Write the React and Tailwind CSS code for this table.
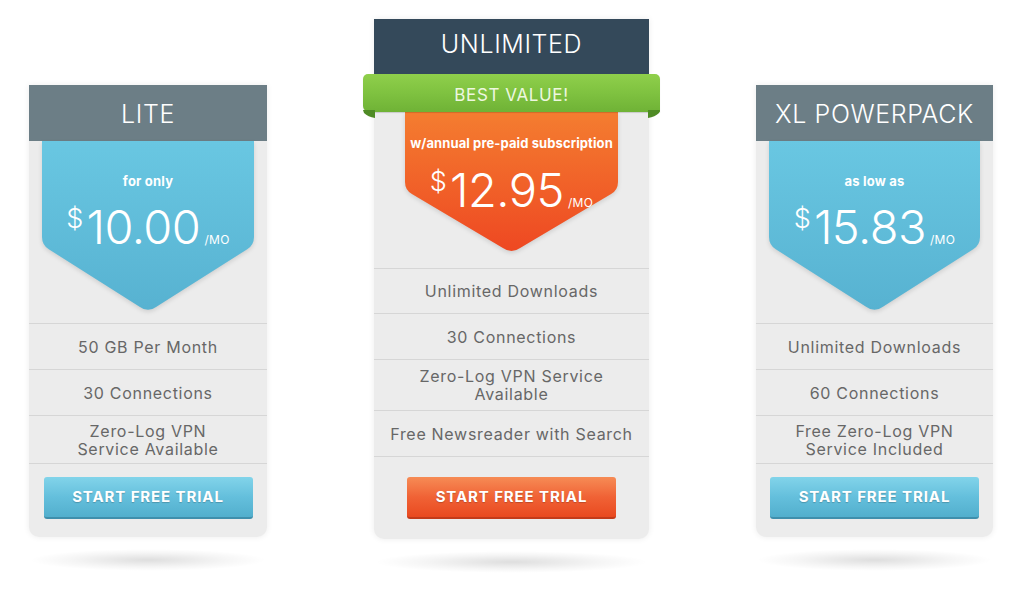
import React from "react";

const shieldPath = (w, straight, tip) => {
  const mid = w / 2;
  const r = 8;
  // slope of the V edges
  const dx = mid;
  const dy = tip - straight;
  const len = Math.sqrt(dx * dx + dy * dy);
  const ux = dx / len;
  const uy = dy / len;
  return [
    `M0 0 H${w} V${straight - r}`,
    `Q${w} ${straight} ${w - r * ux} ${straight + r * uy}`,
    `L${mid + 10 * ux} ${tip - 10 * uy}`,
    `Q${mid} ${tip + 1} ${mid - 10 * ux} ${tip - 10 * uy}`,
    `L${r * ux} ${straight + r * uy}`,
    `Q0 ${straight} 0 ${straight - r} Z`,
  ].join(" ");
};

const Shield = ({ id, w, straight, tip, from, to, className, children }) => (
  <div className={`relative mx-auto ${className}`} style={{ width: w, height: tip }}>
    <svg className="absolute inset-0 drop-shadow-[0_2px_2px_rgba(0,0,0,0.12)]" width={w} height={tip} viewBox={`0 0 ${w} ${tip}`}>
      <defs>
        <linearGradient id={id} x1="0" y1="0" x2="0" y2="1">
          <stop offset="0%" stopColor={from} />
          <stop offset="100%" stopColor={to} />
        </linearGradient>
      </defs>
      <path d={shieldPath(w, straight, tip)} fill={`url(#${id})`} />
    </svg>
    <div className="relative flex flex-col items-center text-white">{children}</div>
  </div>
);

const Price = ({ amount, className }) => (
  <div className={`flex items-baseline ${className}`}>
    <span className="self-start mt-[2px] text-[27px] font-light leading-none">$</span>
    <span className="text-[47px] font-light leading-none tracking-[-0.5px] ml-[3px]">{amount}</span>
    <span className="text-[12px] ml-[4px] leading-none tracking-[0.3px]">/MO</span>
  </div>
);

const Row = ({ children, h = "h-[46px]", tall }) => (
  <div
    className={`flex items-center justify-center text-center border-t border-[#d6d6d6] text-[16px] text-[#676767] tracking-[0.7px] ${h} ${
      tall ? "leading-[18px]" : ""
    }`}
  >
    {children}
  </div>
);

const TrialButton = ({ orange }) => (
  <button
    className={`mx-auto flex h-[42px] w-[209px] items-center justify-center rounded-[3px] border-b-2 text-[15px] font-bold tracking-[0.9px] text-white [text-shadow:0_1px_1px_rgba(0,0,0,0.2)] ${
      orange
        ? "bg-gradient-to-b from-[#f68b55] via-[#f06235] to-[#e9491f] border-[#c23b1a]"
        : "bg-gradient-to-b from-[#82d4ea] via-[#64bfdc] to-[#52afcd] border-[#3f8fac]"
    }`}
  >
    START FREE TRIAL
  </button>
);

const FloorShadow = () => (
  <div className="mt-[12px] h-[22px] w-full bg-[radial-gradient(ellipse_at_center,rgba(0,0,0,0.13),rgba(0,0,0,0.04)_45%,transparent_70%)]" />
);

const SideCard = ({ title, id, lead, amount, features, width }) => (
  <div className="mt-[66px] flex flex-col" style={{ width }}>
    <div className="rounded-b-[10px] bg-[#ececec] shadow-[0_0_6px_rgba(0,0,0,0.08)]">
      <div className="flex h-[56px] items-center justify-center bg-[#6c7e86] pt-[3px] text-[25px] font-light tracking-[0.6px] text-white">
        {title}
      </div>
      <div className="h-[182px]">
        <Shield id={id} w={width - 26} straight={104} tip={171} from="#69c7e2" to="#57b2d1">
          <div className="mt-[32px] text-[13px] font-bold leading-[16px] tracking-[0.2px]">{lead}</div>
          <Price amount={amount} className="mt-[14px]" />
        </Shield>
      </div>
      {features.map((f, i) => (
        <Row key={i} tall={f.tall} h={f.tall ? "h-[48px]" : "h-[46px]"}>
          <span className="px-4">{f.text}</span>
        </Row>
      ))}
      <div className="border-t border-[#d6d6d6] pt-[13px] pb-[18px]">
        <TrialButton />
      </div>
    </div>
    <FloorShadow />
  </div>
);

const Ribbon = () => (
  <div className="relative z-10 -mx-[11px] h-[38px]">
    <div className="flex h-[38px] items-center justify-center rounded-t-[5px] rounded-bl-[6px] bg-gradient-to-b from-[#8fcf4b] via-[#7fc240] to-[#6fb236] pt-[5px] text-[17px] tracking-[0.6px] text-[#eef7e0] shadow-[0_1px_1px_rgba(0,0,0,0.15)]">
      BEST VALUE!
    </div>
    <svg className="absolute -bottom-[6px] left-0" width="13" height="8" viewBox="0 0 13 8">
      <path d="M0 0 H12 V8 Q5 7 1 3 Z" fill="#4f8b25" />
    </svg>
    <svg className="absolute -bottom-[6px] right-0" width="13" height="8" viewBox="0 0 13 8">
      <path d="M13 0 H1 V8 Q8 7 12 3 Z" fill="#4f8b25" />
    </svg>
  </div>
);

const MiddleCard = () => (
  <div className="flex w-[275px] flex-col">
    <div className="rounded-b-[10px] bg-[#ececec] shadow-[0_0_6px_rgba(0,0,0,0.08)]">
      <div className="flex h-[55px] items-center justify-center bg-[#34495a] pb-[3px] text-[25px] font-light tracking-[0.6px] text-white">
        UNLIMITED
      </div>
      <Ribbon />
      <div className="h-[156px]">
        <Shield id="orangeShield" w={213} straight={78} tip={141} from="#f47d30" to="#ee4822">
          <div className="mt-[23px] text-[13px] font-bold leading-[16px] tracking-[0.1px]">w/annual pre-paid subscription</div>
          <Price amount="12.95" className="mt-[15px]" />
        </Shield>
      </div>
      <Row h="h-[45px]">Unlimited Downloads</Row>
      <Row>30 Connections</Row>
      <Row tall h="h-[51px]">
        <span className="px-4">
          Zero-Log VPN Service
          <br />
          Available
        </span>
      </Row>
      <Row>Free Newsreader with Search</Row>
      <div className="border-t border-[#d6d6d6] pt-[20px] pb-[20px]">
        <TrialButton orange />
      </div>
    </div>
    <FloorShadow />
  </div>
);

export default function App() {
  return (
    <div className="h-[590px] w-[1024px] overflow-hidden bg-white font-['Inter','Liberation_Sans',sans-serif]">
      <div className="flex items-start gap-[107px] pl-[29px] pt-[19px]">
        <SideCard
          width={238}
          id="blueShieldA"
          title="LITE"
          lead="for only"
          amount="10.00"
          features={[
            { text: "50 GB Per Month" },
            { text: "30 Connections" },
            { text: <>Zero-Log VPN<br />Service Available</>, tall: true },
          ]}
        />
        <MiddleCard />
        <SideCard
          width={237}
          id="blueShieldB"
          title="XL POWERPACK"
          lead="as low as"
          amount="15.83"
          features={[
            { text: "Unlimited Downloads" },
            { text: "60 Connections" },
            { text: <>Free Zero-Log VPN<br />Service Included</>, tall: true },
          ]}
        />
      </div>
    </div>
  );
}
